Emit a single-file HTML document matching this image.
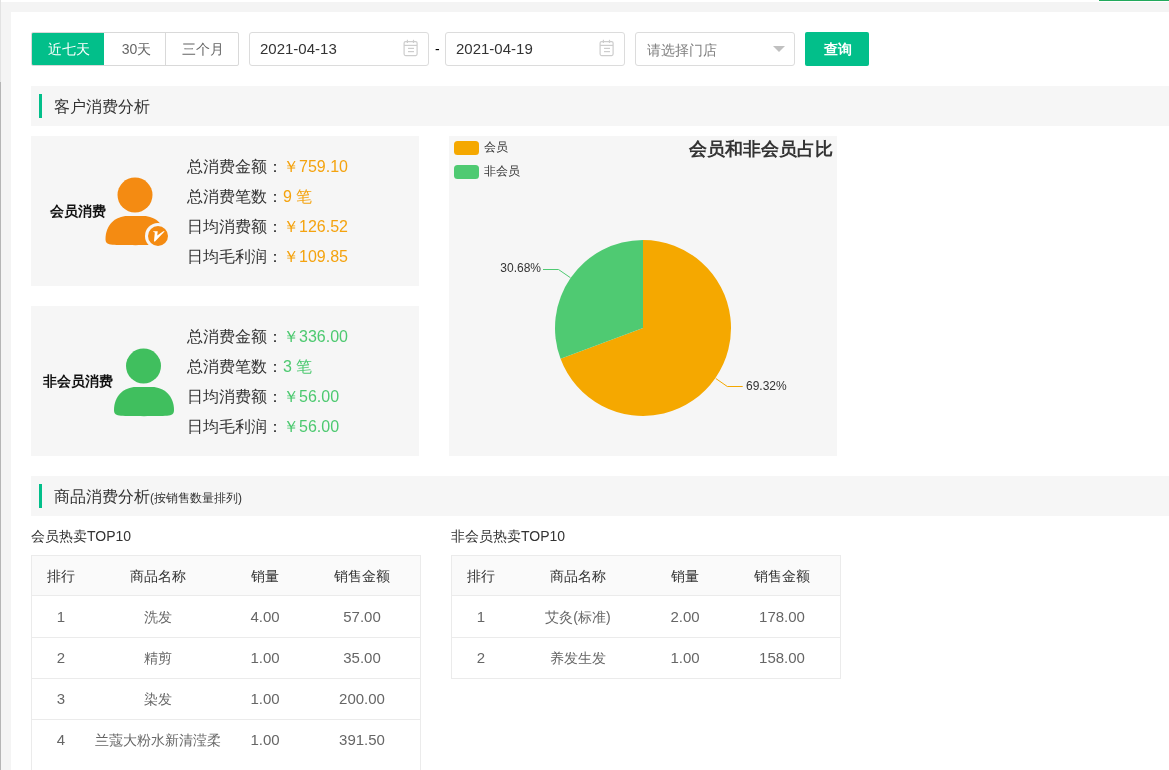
<!DOCTYPE html>
<html><head><meta charset="utf-8">
<style>
*{box-sizing:border-box;margin:0;padding:0}
html,body{will-change:transform;width:1169px;height:770px;overflow:hidden;background:#f4f4f4;font-family:"Liberation Sans",sans-serif;color:#333}
.abs{position:absolute}
#lb{left:0;top:0;width:1px;height:82px;background:#e2e2e2}
#lb2{left:0;top:82px;width:1px;height:688px;background:#b5b5b5}
#tw{left:1px;top:0;width:1168px;height:2px;background:#fff}
#tg{left:1099px;top:0;width:70px;height:1px;background:#22a95c}
#panel{left:11px;top:12px;width:1158px;height:758px;background:#fff}
.btng{left:31px;top:32px;width:208px;height:34px;border:1px solid #d9d9d9;border-radius:2px;background:#fff;overflow:hidden}
.btn{position:absolute;top:0;height:32px;line-height:32px;text-align:center;font-size:14px;color:#666}
.inp{top:32px;height:34px;border:1px solid #dcdcdc;border-radius:3px;background:#fff}
.sech{left:31px;width:1138px;height:40px;background:#f6f6f6}
.sech .bar{position:absolute;left:8px;top:8px;width:3px;height:24px;background:#02bf8a}
.sech .t{position:absolute;left:23px;top:1px;line-height:40px;font-size:16px;color:#333;white-space:nowrap}
.card{background:#f6f6f6}
.lbl{text-align:center;font-size:14px;font-weight:bold;color:#111}
.st{font-size:16px;line-height:30px;color:#333;white-space:nowrap}
.tbl{border:1px solid #ebebeb;border-bottom:none;background:#fff;overflow:hidden}
.cell{width:160px;text-align:center;font-size:14px;line-height:40px;color:#666;white-space:nowrap}
</style></head><body>
<div class="abs" id="lb"></div><div class="abs" id="lb2"></div>
<div class="abs" id="tw"></div>
<div class="abs" id="tg"></div>
<div class="abs" id="panel"></div>

<!-- toolbar -->
<div class="abs btng">
  <div class="btn" style="left:0;width:72px;background:#02bf8a;color:#fff;padding-left:2px">近七天</div>
  <div class="btn" style="left:74px;width:61px">30天</div>
  <div class="btn" style="left:133px;width:73px;border-left:1px solid #d9d9d9;padding-left:2px">三个月</div>
</div>

<div class="abs inp" style="left:249px;width:180px"></div>
<div class="abs inp" style="left:445px;width:180px"></div>
<div class="abs inp" style="left:635px;width:160px"></div>

<div class="abs" style="left:260px;top:32px;line-height:34px;font-size:15px;color:#333">2021-04-13</div>
<svg class="abs" style="left:403px;top:39px" width="16" height="18" viewBox="0 0 16 18"><g fill="none" stroke="#cdcdcd" stroke-width="1.2"><rect x="1.1" y="2.6" width="13" height="14" rx="1.5"/><line x1="1" y1="6.4" x2="14" y2="6.4"/><line x1="4.4" y1="0.8" x2="4.4" y2="4"/><line x1="10.5" y1="0.8" x2="10.5" y2="4"/><line x1="5" y1="9.4" x2="11" y2="9.4"/><line x1="5" y1="12.6" x2="11" y2="12.6"/></g></svg>
<div class="abs" style="left:435px;top:32px;line-height:34px;font-size:14px;color:#000">-</div>
<div class="abs" style="left:456px;top:32px;line-height:34px;font-size:15px;color:#333">2021-04-19</div>
<svg class="abs" style="left:599px;top:39px" width="16" height="18" viewBox="0 0 16 18"><g fill="none" stroke="#cdcdcd" stroke-width="1.2"><rect x="1.1" y="2.6" width="13" height="14" rx="1.5"/><line x1="1" y1="6.4" x2="14" y2="6.4"/><line x1="4.4" y1="0.8" x2="4.4" y2="4"/><line x1="10.5" y1="0.8" x2="10.5" y2="4"/><line x1="5" y1="9.4" x2="11" y2="9.4"/><line x1="5" y1="12.6" x2="11" y2="12.6"/></g></svg>
<div class="abs" style="left:647px;top:33px;line-height:34px;font-size:14px;color:#808080">请选择门店</div>
<div class="abs" style="left:773px;top:46px;width:0;height:0;border-left:6px solid transparent;border-right:6px solid transparent;border-top:6px solid #c0c0c0"></div>
<div class="abs" style="left:805px;top:32px;width:64px;height:34px;background:#02bf8a;border-radius:2px;color:#fff;font-size:14px;font-weight:bold;line-height:34px;text-align:center;padding-left:2px">查询</div>

<!-- section 1 -->
<div class="abs sech" style="top:86px"><div class="bar"></div><div class="t">客户消费分析</div></div>

<div class="abs card" style="left:31px;top:136px;width:388px;height:150px"></div>
<div class="abs card" style="left:31px;top:306px;width:388px;height:150px"></div>
<div class="abs card" style="left:449px;top:136px;width:388px;height:320px"></div>

<!-- section 2 -->
<div class="abs sech" style="top:476px"><div class="bar"></div><div class="t">商品消费分析<span style="font-size:12px">(按销售数量排列)</span></div></div>

<svg class="abs" style="left:0;top:0" width="1169" height="770" viewBox="0 0 1169 770">
<!-- member icon -->
<circle cx="135" cy="195" r="17.5" fill="#f48b12"/>
<path d="M105.5,239.0 C105.5,225.0 115.5,216.0 127.5,216.0 L143.5,216.0 C155.5,216.0 165.5,225.0 165.5,239.0 C165.5,243.0 163.5,244.4 158.5,244.8 C149.5,245.3 121.5,245.3 112.5,244.8 C107.5,244.4 105.5,243.0 105.5,239.0 Z" fill="#f48b12"/>
<circle cx="158" cy="236" r="13" fill="#f6f6f6"/>
<circle cx="158" cy="236" r="10" fill="#f48b12"/>
<path d="M153.17,231.22 L157.73,231.22 L157.23,235.39 L163.30,231.22 L164.75,231.22 L155.00,241.51 L153.95,241.51 L154.81,232.39 L153.17,231.69 Z" fill="#fff"/>
<!-- non-member icon -->
<circle cx="143.5" cy="366" r="17.5" fill="#40bf5e"/>
<path d="M114.0,410.0 C114.0,396.0 124.0,387.0 136.0,387.0 L152.0,387.0 C164.0,387.0 174.0,396.0 174.0,410.0 C174.0,414.0 172.0,415.4 167.0,415.8 C158.0,416.3 130.0,416.3 121.0,415.8 C116.0,415.4 114.0,414.0 114.0,410.0 Z" fill="#40bf5e"/>
<!-- legend -->
<rect x="454" y="141" width="25" height="14" rx="3.5" fill="#f5a800"/>
<rect x="454" y="165" width="25" height="14" rx="3.5" fill="#4fca72"/>
<!-- pie -->
<path d="M643,328 L643,240 A88,88 0 1 1 560.55,358.75 Z" fill="#f5a800"/>
<path d="M643,328 L560.55,358.75 A88,88 0 0 1 643,240 Z" fill="#4fca72"/>
<polyline points="570.4,277.7 558.5,269.5 543,269.5" fill="none" stroke="#4fca72" stroke-width="1"/>
<polyline points="715.8,378.5 727.3,386.5 742.7,386.5" fill="none" stroke="#f5a800" stroke-width="1"/>
</svg>
<div class="abs lbl" style="left:31px;top:136px;width:94px;line-height:150px">会员消费</div>
<div class="abs lbl" style="left:31px;top:306px;width:94px;line-height:150px">非会员消费</div>
<div class="abs st" style="left:187px;top:152px">总消费金额：<span style="color:#f4a30f">￥759.10</span></div>
<div class="abs st" style="left:187px;top:182px">总消费笔数：<span style="color:#f4a30f">9 笔</span></div>
<div class="abs st" style="left:187px;top:212px">日均消费额：<span style="color:#f4a30f">￥126.52</span></div>
<div class="abs st" style="left:187px;top:242px">日均毛利润：<span style="color:#f4a30f">￥109.85</span></div>
<div class="abs st" style="left:187px;top:322px">总消费金额：<span style="color:#4dc970">￥336.00</span></div>
<div class="abs st" style="left:187px;top:352px">总消费笔数：<span style="color:#4dc970">3 笔</span></div>
<div class="abs st" style="left:187px;top:382px">日均消费额：<span style="color:#4dc970">￥56.00</span></div>
<div class="abs st" style="left:187px;top:412px">日均毛利润：<span style="color:#4dc970">￥56.00</span></div>

<div class="abs" style="left:484px;top:138px;font-size:12px;line-height:18px;color:#333">会员</div>
<div class="abs" style="left:484px;top:162px;font-size:12px;line-height:18px;color:#333">非会员</div>
<div class="abs" style="left:601px;top:137px;width:232px;text-align:right;font-size:18px;font-weight:bold;line-height:24px;color:#333">会员和非会员占比</div>
<div class="abs" style="left:440px;top:259px;width:101px;text-align:right;font-size:12px;line-height:18px;color:#333">30.68%</div>
<div class="abs" style="left:746px;top:377px;font-size:12px;line-height:18px;color:#333">69.32%</div>
<div class="abs" style="left:31px;top:526px;font-size:14px;line-height:20px;color:#333">会员热卖TOP10</div>
<div class="abs tbl" style="left:31px;top:555px;width:390px;height:235px">
<div class="abs" style="left:0;top:0;width:388px;height:40px;background:#fafafa;border-bottom:1px solid #ebebeb"></div>
<div class="abs cell" style="left:-51px;top:0;color:#333">排行</div>
<div class="abs cell" style="left:46px;top:0;color:#333">商品名称</div>
<div class="abs cell" style="left:153px;top:0;color:#333">销量</div>
<div class="abs cell" style="left:250px;top:0;color:#333">销售金额</div>
<div class="abs" style="left:0;top:41px;width:388px;height:41px;border-bottom:1px solid #ebebeb"></div>
<div class="abs cell" style="font-size:15px;left:-51px;top:41px">1</div>
<div class="abs cell" style="left:46px;top:41px">洗发</div>
<div class="abs cell" style="font-size:15px;left:153px;top:41px">4.00</div>
<div class="abs cell" style="font-size:15px;left:250px;top:41px">57.00</div>
<div class="abs" style="left:0;top:82px;width:388px;height:41px;border-bottom:1px solid #ebebeb"></div>
<div class="abs cell" style="font-size:15px;left:-51px;top:82px">2</div>
<div class="abs cell" style="left:46px;top:82px">精剪</div>
<div class="abs cell" style="font-size:15px;left:153px;top:82px">1.00</div>
<div class="abs cell" style="font-size:15px;left:250px;top:82px">35.00</div>
<div class="abs" style="left:0;top:123px;width:388px;height:41px;border-bottom:1px solid #ebebeb"></div>
<div class="abs cell" style="font-size:15px;left:-51px;top:123px">3</div>
<div class="abs cell" style="left:46px;top:123px">染发</div>
<div class="abs cell" style="font-size:15px;left:153px;top:123px">1.00</div>
<div class="abs cell" style="font-size:15px;left:250px;top:123px">200.00</div>
<div class="abs cell" style="font-size:15px;left:-51px;top:164px">4</div>
<div class="abs cell" style="left:46px;top:164px">兰蔻大粉水新清滢柔</div>
<div class="abs cell" style="font-size:15px;left:153px;top:164px">1.00</div>
<div class="abs cell" style="font-size:15px;left:250px;top:164px">391.50</div>
</div>
<div class="abs" style="left:451px;top:526px;font-size:14px;line-height:20px;color:#333">非会员热卖TOP10</div>
<div class="abs tbl" style="left:451px;top:555px;width:390px;height:124px">
<div class="abs" style="left:0;top:0;width:388px;height:40px;background:#fafafa;border-bottom:1px solid #ebebeb"></div>
<div class="abs cell" style="left:-51px;top:0;color:#333">排行</div>
<div class="abs cell" style="left:46px;top:0;color:#333">商品名称</div>
<div class="abs cell" style="left:153px;top:0;color:#333">销量</div>
<div class="abs cell" style="left:250px;top:0;color:#333">销售金额</div>
<div class="abs" style="left:0;top:41px;width:388px;height:41px;border-bottom:1px solid #ebebeb"></div>
<div class="abs cell" style="font-size:15px;left:-51px;top:41px">1</div>
<div class="abs cell" style="left:46px;top:41px">艾灸(标准)</div>
<div class="abs cell" style="font-size:15px;left:153px;top:41px">2.00</div>
<div class="abs cell" style="font-size:15px;left:250px;top:41px">178.00</div>
<div class="abs" style="left:0;top:82px;width:388px;height:41px;border-bottom:1px solid #ebebeb"></div>
<div class="abs cell" style="font-size:15px;left:-51px;top:82px">2</div>
<div class="abs cell" style="left:46px;top:82px">养发生发</div>
<div class="abs cell" style="font-size:15px;left:153px;top:82px">1.00</div>
<div class="abs cell" style="font-size:15px;left:250px;top:82px">158.00</div>
</div>
</body></html>
